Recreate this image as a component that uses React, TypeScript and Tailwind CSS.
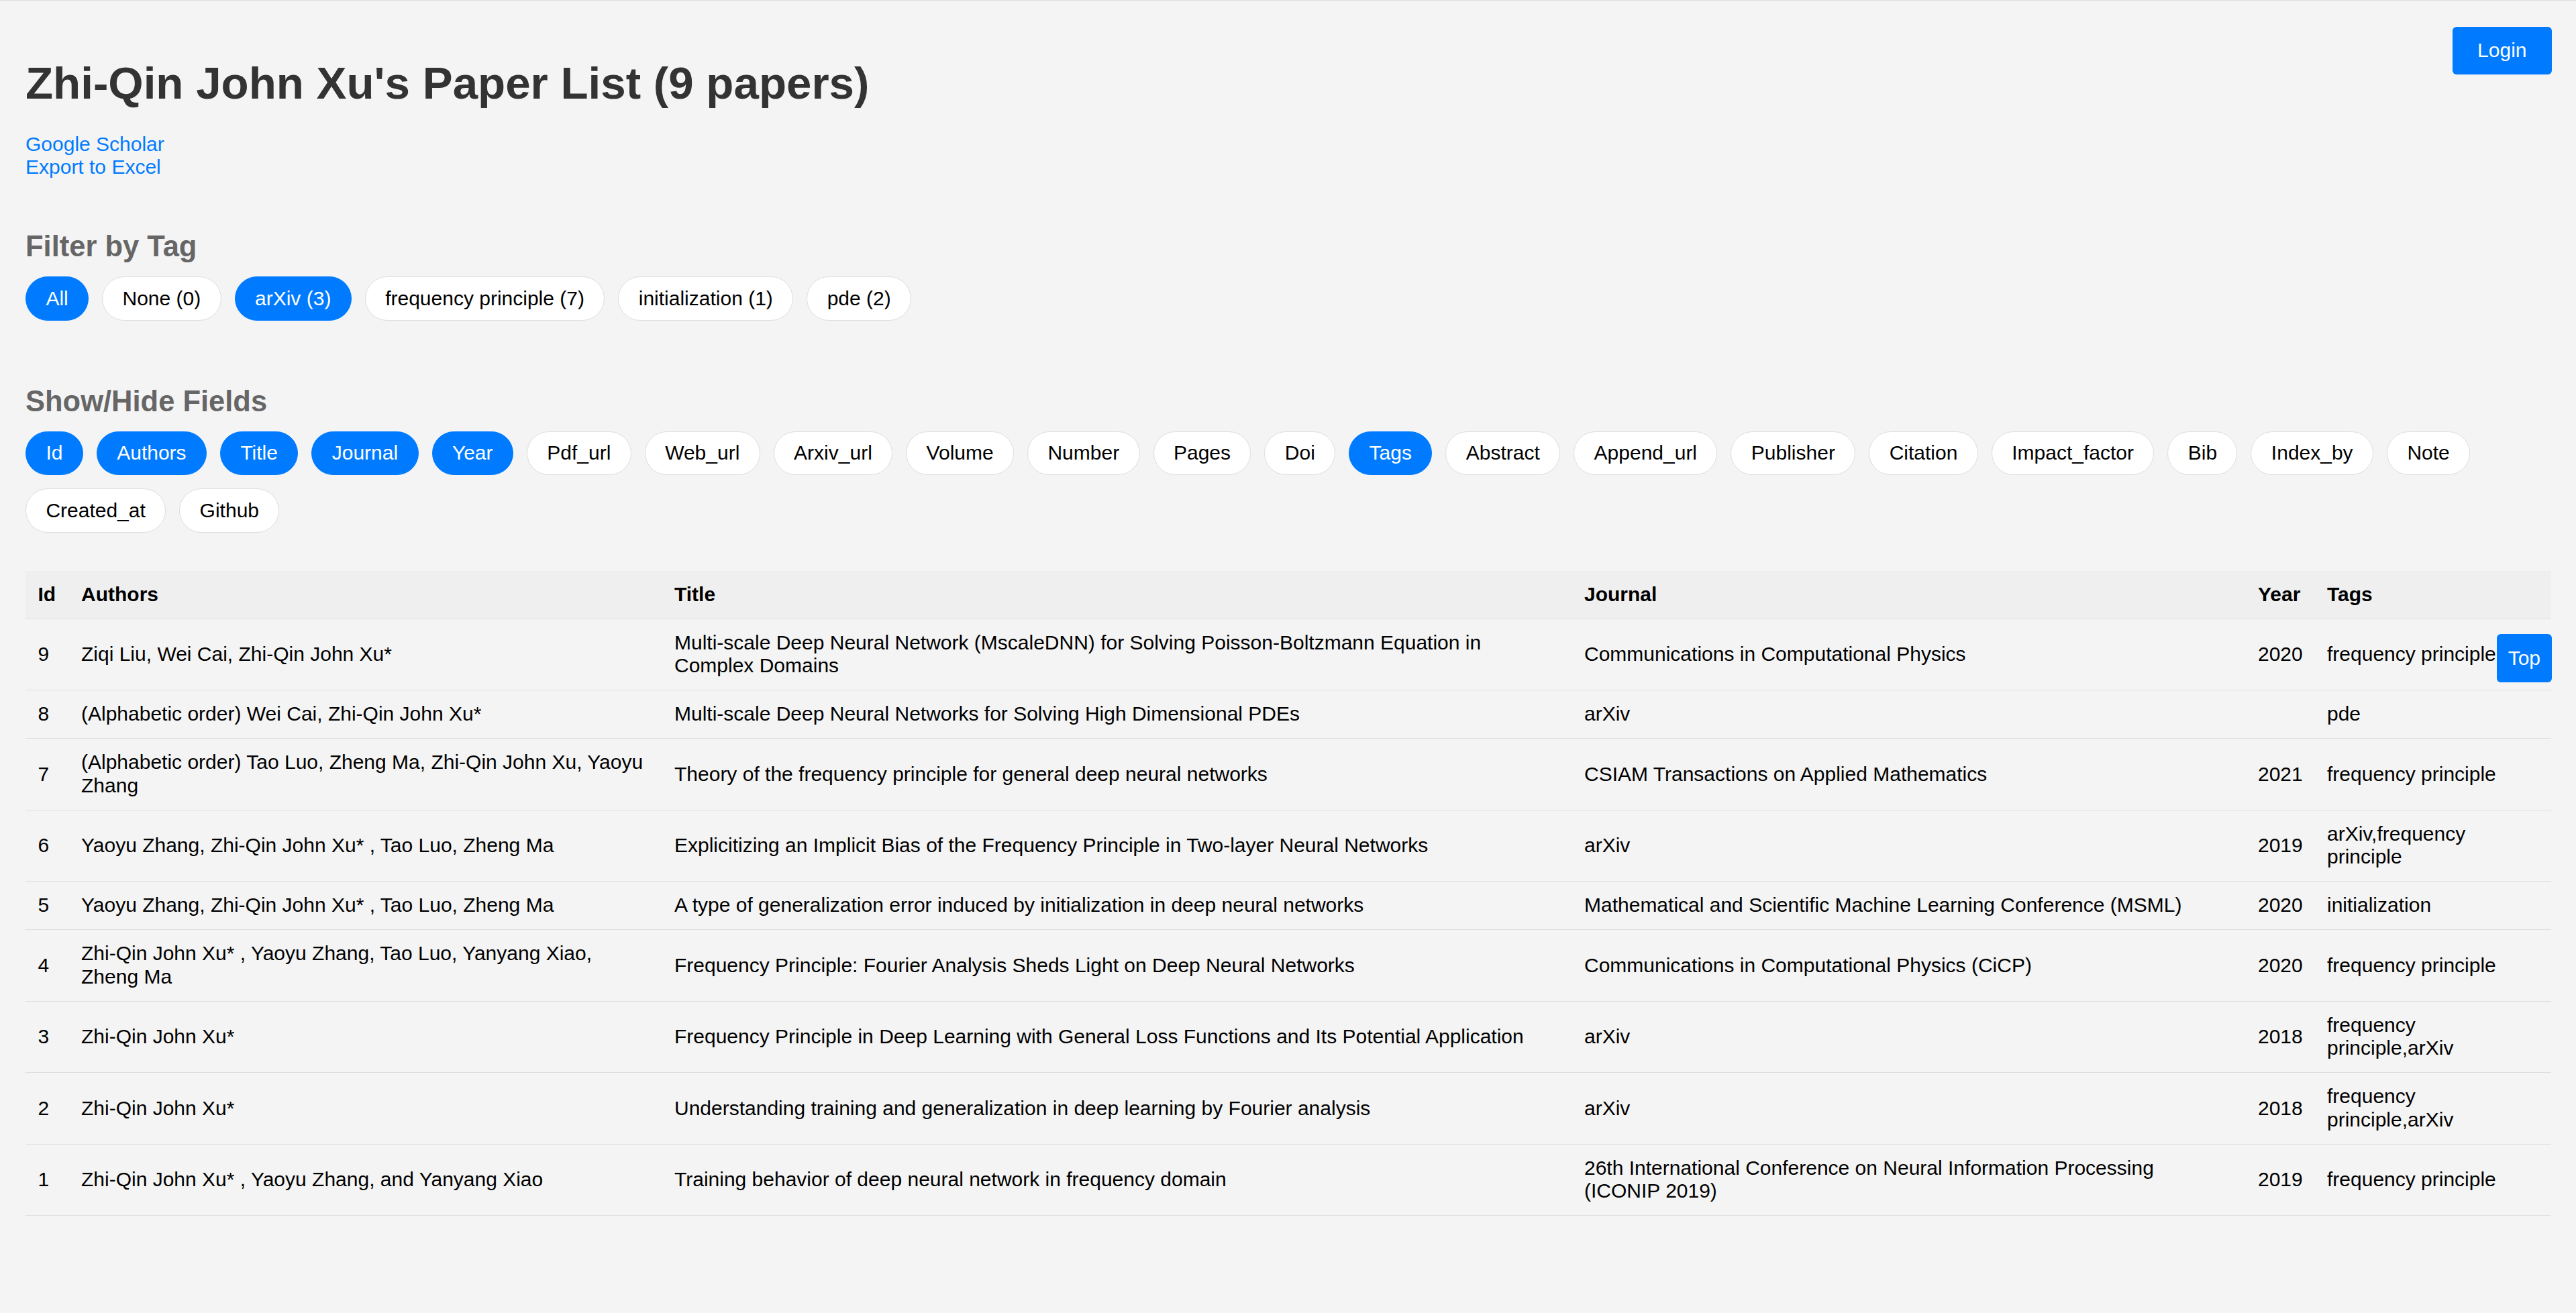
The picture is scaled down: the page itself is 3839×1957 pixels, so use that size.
import React, { useState } from 'react';

type Paper = {
  id: number;
  authors: string;
  title: string;
  journal: string;
  year: string;
  tags: string;
};

const papers: Paper[] = [
  {
    id: 9,
    authors: 'Ziqi Liu, Wei Cai, Zhi-Qin John Xu*',
    title:
      'Multi-scale Deep Neural Network (MscaleDNN) for Solving Poisson-Boltzmann Equation in Complex Domains',
    journal: 'Communications in Computational Physics',
    year: '2020',
    tags: 'frequency principle',
  },
  {
    id: 8,
    authors: '(Alphabetic order) Wei Cai, Zhi-Qin John Xu*',
    title: 'Multi-scale Deep Neural Networks for Solving High Dimensional PDEs',
    journal: 'arXiv',
    year: '',
    tags: 'pde',
  },
  {
    id: 7,
    authors: '(Alphabetic order) Tao Luo, Zheng Ma, Zhi-Qin John Xu, Yaoyu Zhang',
    title: 'Theory of the frequency principle for general deep neural networks',
    journal: 'CSIAM Transactions on Applied Mathematics',
    year: '2021',
    tags: 'frequency principle',
  },
  {
    id: 6,
    authors: 'Yaoyu Zhang, Zhi-Qin John Xu* , Tao Luo, Zheng Ma',
    title: 'Explicitizing an Implicit Bias of the Frequency Principle in Two-layer Neural Networks',
    journal: 'arXiv',
    year: '2019',
    tags: 'arXiv,frequency principle',
  },
  {
    id: 5,
    authors: 'Yaoyu Zhang, Zhi-Qin John Xu* , Tao Luo, Zheng Ma',
    title: 'A type of generalization error induced by initialization in deep neural networks',
    journal: 'Mathematical and Scientific Machine Learning Conference (MSML)',
    year: '2020',
    tags: 'initialization',
  },
  {
    id: 4,
    authors: 'Zhi-Qin John Xu* , Yaoyu Zhang, Tao Luo, Yanyang Xiao, Zheng Ma',
    title: 'Frequency Principle: Fourier Analysis Sheds Light on Deep Neural Networks',
    journal: 'Communications in Computational Physics (CiCP)',
    year: '2020',
    tags: 'frequency principle',
  },
  {
    id: 3,
    authors: 'Zhi-Qin John Xu*',
    title:
      'Frequency Principle in Deep Learning with General Loss Functions and Its Potential Application',
    journal: 'arXiv',
    year: '2018',
    tags: 'frequency principle,arXiv',
  },
  {
    id: 2,
    authors: 'Zhi-Qin John Xu*',
    title: 'Understanding training and generalization in deep learning by Fourier analysis',
    journal: 'arXiv',
    year: '2018',
    tags: 'frequency principle,arXiv',
  },
  {
    id: 1,
    authors: 'Zhi-Qin John Xu* , Yaoyu Zhang, and Yanyang Xiao',
    title: 'Training behavior of deep neural network in frequency domain',
    journal: '26th International Conference on Neural Information Processing (ICONIP 2019)',
    year: '2019',
    tags: 'frequency principle',
  },
];

const tagFilters = ['All', 'None (0)', 'arXiv (3)', 'frequency principle (7)', 'initialization (1)', 'pde (2)'];

const fields = [
  'Id', 'Authors', 'Title', 'Journal', 'Year', 'Pdf_url', 'Web_url', 'Arxiv_url', 'Volume', 'Number',
  'Pages', 'Doi', 'Tags', 'Abstract', 'Append_url', 'Publisher', 'Citation', 'Impact_factor', 'Bib',
  'Index_by', 'Note', 'Created_at', 'Github',
];

// column widths for the fields that have data in this list
const columns: { key: keyof Paper; label: string; col: string; cell: string }[] = [
  { key: 'id', label: 'Id', col: 'w-[64.5px]', cell: 'pl-[18.5px] pr-[10px]' },
  { key: 'authors', label: 'Authors', col: 'w-[884px]', cell: 'pl-[18.5px] pr-[20px]' },
  { key: 'title', label: 'Title', col: 'w-[1356px]', cell: 'pl-[18.5px] pr-[30px]' },
  { key: 'journal', label: 'Journal', col: 'w-[1004px]', cell: 'pl-[18.5px] pr-[30px]' },
  { key: 'year', label: 'Year', col: 'w-[103px]', cell: 'pl-[18.5px] pr-[10px]' },
  { key: 'tags', label: 'Tags', col: '', cell: 'pl-[18.5px] pr-[18.5px]' },
];

const Pill: React.FC<{ label: string; active: boolean; onClick: () => void }> = ({ label, active, onClick }) => (
  <button
    onClick={onClick}
    className={
      active
        ? 'rounded-full border border-[#007bff] bg-[#007bff] px-[29.4px] py-[14.5px] text-[30px] leading-[34.5px] text-white'
        : 'rounded-full border border-[#dddddd] bg-white px-[29.4px] py-[14.5px] text-[30px] leading-[34.5px] text-black'
    }
  >
    {label}
  </button>
);

export default function App() {
  const [activeTags, setActiveTags] = useState<string[]>(['All', 'arXiv (3)']);
  const [visible, setVisible] = useState<string[]>(['Id', 'Authors', 'Title', 'Journal', 'Year', 'Tags']);

  const toggleTag = (tag: string) => {
    setActiveTags((prev) => (prev.includes(tag) ? prev.filter((t) => t !== tag) : [...prev, tag]));
  };

  const toggleField = (field: string) => {
    setVisible((prev) => (prev.includes(field) ? prev.filter((f) => f !== field) : [...prev, field]));
  };

  const shown = columns.filter((c) => visible.includes(c.label));

  return (
    <div
      className="relative min-h-[1957px] border-t border-[#dddddd] bg-[#f4f4f4] pl-[38px] pr-[37px] pb-[100px] text-black"
      style={{ fontFamily: '"Liberation Sans", Arial, sans-serif' }}
    >
      {/* Login */}
      <button className="absolute right-[36px] top-[39px] rounded-[6px] bg-[#007bff] px-[37.5px] py-[18.25px] text-[30px] leading-[34.5px] text-white">
        Login
      </button>

      <h1 className="mt-[84px] text-[67.3px] font-bold leading-[77px] text-[#333333]">
        Zhi-Qin John Xu's Paper List (9 papers)
      </h1>

      <div className="mt-[36px] flex flex-col items-start text-[30px] leading-[33.5px] text-[#007bff]">
        <a href="#">Google Scholar</a>
        <a href="#">Export to Excel</a>
      </div>

      {/* Filter by Tag */}
      <h2 className="mt-[77px] text-[43.5px] font-bold leading-[50px] text-[#666666]">Filter by Tag</h2>
      <div className="mt-[20px] flex flex-wrap gap-[20px]">
        {tagFilters.map((t) => (
          <Pill key={t} label={t} active={activeTags.includes(t)} onClick={() => toggleTag(t)} />
        ))}
      </div>

      {/* Show/Hide Fields */}
      <h2 className="mt-[95px] text-[43.5px] font-bold leading-[50px] text-[#666666]">Show/Hide Fields</h2>
      <div className="mt-[20px] flex flex-wrap gap-[20px]">
        {fields.map((f) => (
          <Pill key={f} label={f} active={visible.includes(f)} onClick={() => toggleField(f)} />
        ))}
      </div>

      {/* Paper table */}
      <table className="mt-[57px] w-full table-fixed border-collapse text-left text-[30px] leading-[34.5px]">
        <colgroup>
          {shown.map((c) => (
            <col key={c.key} className={c.col} />
          ))}
        </colgroup>
        <thead>
          <tr className="border-b border-[#dedede] bg-[#efefef]">
            {shown.map((c) => (
              <th key={c.key} className={`py-[18.25px] font-bold ${c.cell}`}>
                {c.label}
              </th>
            ))}
          </tr>
        </thead>
        <tbody>
          {papers.map((p) => (
            <tr key={p.id} className="border-b border-[#dedede]">
              {shown.map((c) => (
                <td key={c.key} className={`py-[18.25px] align-middle ${c.cell}`}>
                  {p[c.key]}
                </td>
              ))}
            </tr>
          ))}
        </tbody>
      </table>

      {/* Back to top */}
      <button className="absolute right-[36px] top-[944px] rounded-[6px] bg-[#007bff] px-[17px] py-[18.75px] text-[30px] leading-[34.5px] text-white">
        Top
      </button>
    </div>
  );
}
